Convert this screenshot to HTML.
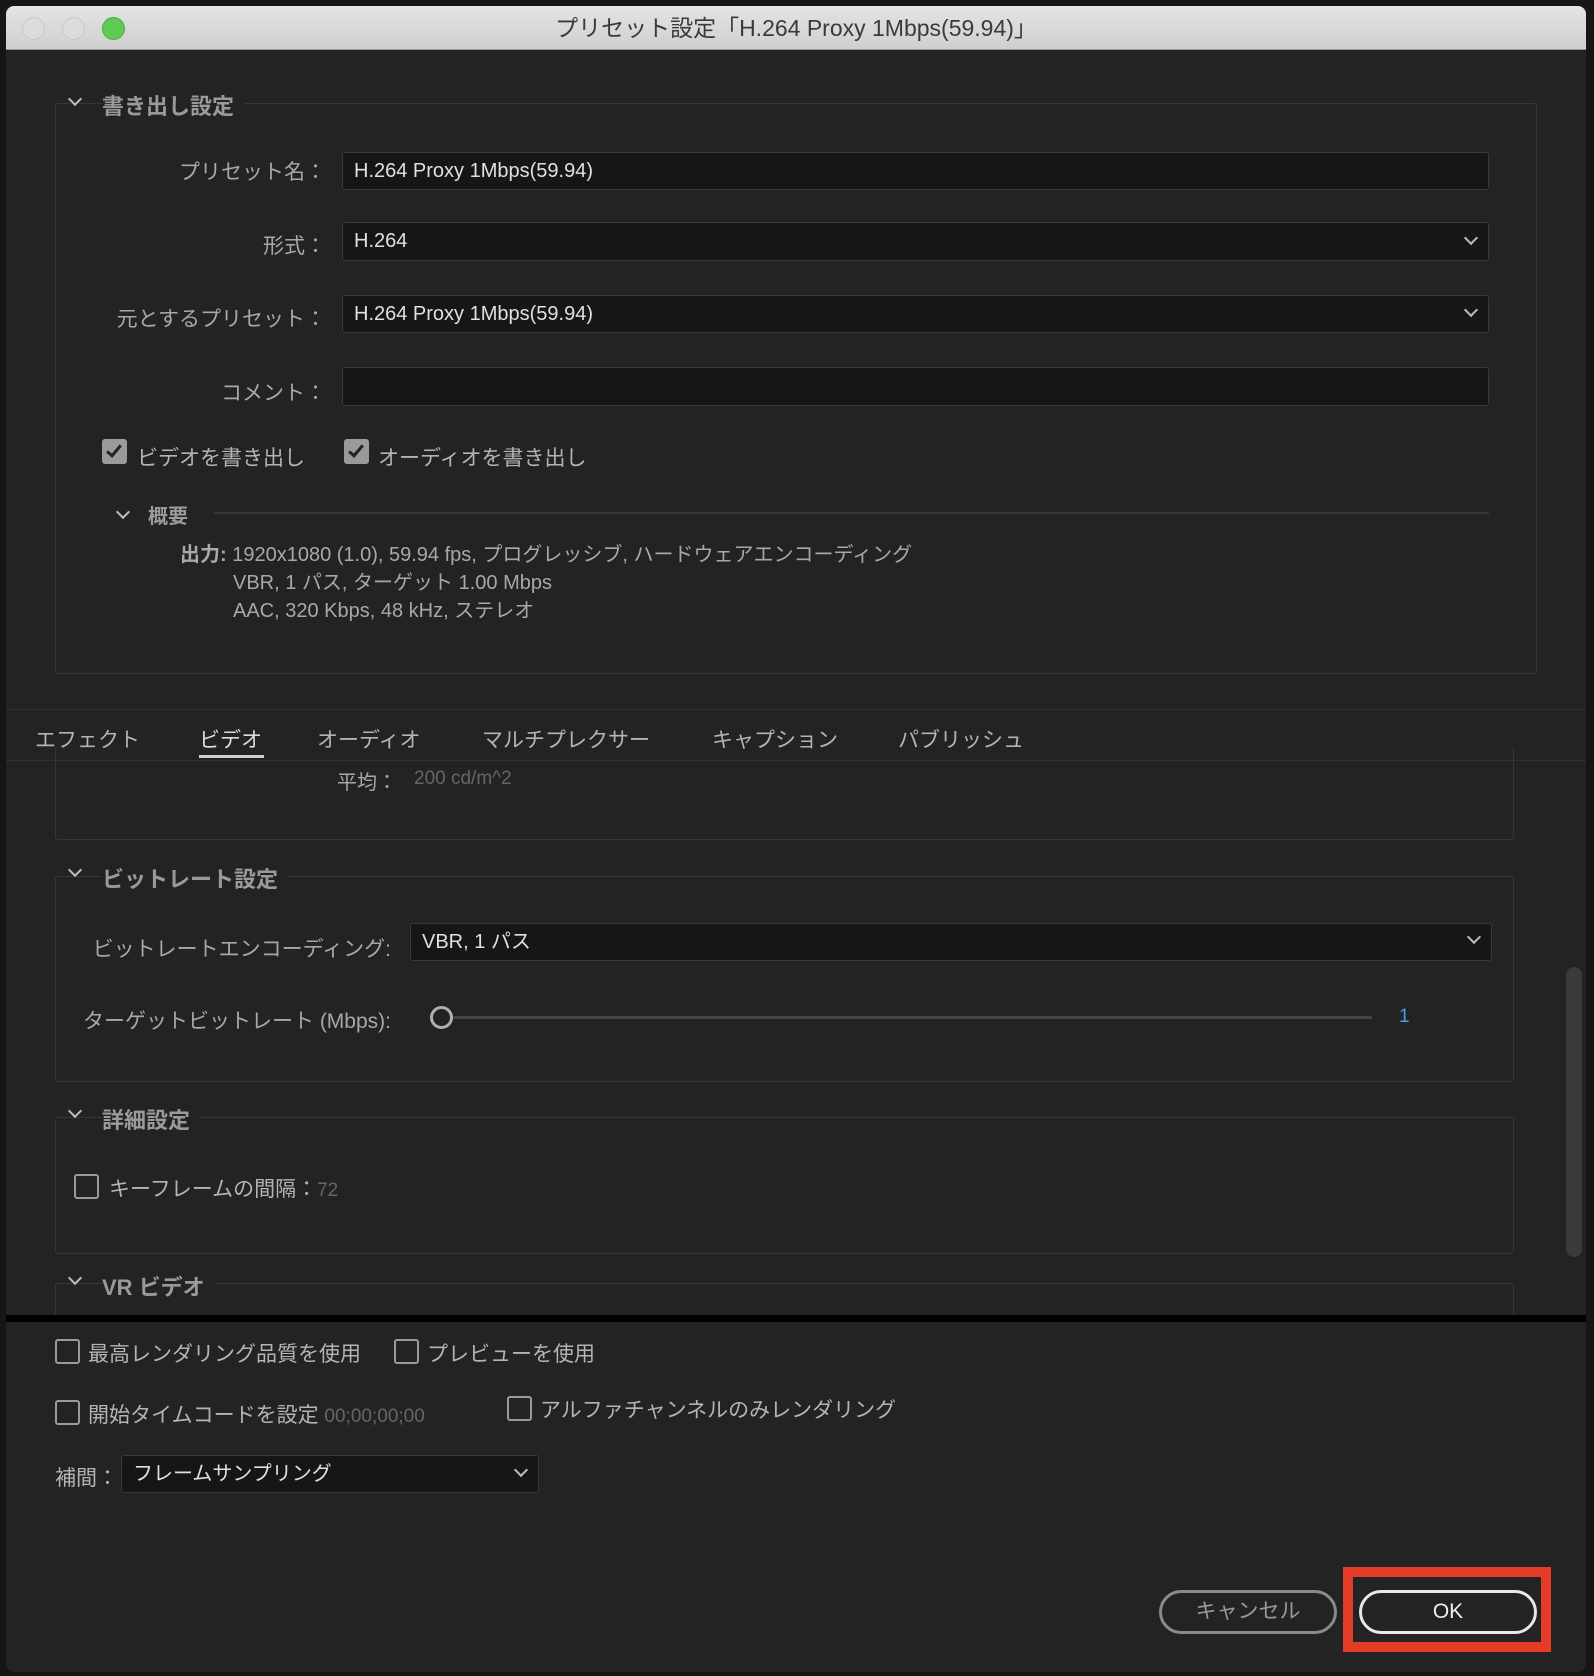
<!DOCTYPE html>
<html><head><meta charset="utf-8"><style>
*{box-sizing:border-box;margin:0;padding:0}
body{width:1594px;height:1676px;background:#161616;position:relative;overflow:hidden;font-family:"Liberation Sans","Noto Sans CJK JP",sans-serif;color:#b4b4b4;font-size:21px}
.a{position:absolute;white-space:nowrap}
.win{position:absolute;left:6px;top:6px;width:1580px;height:1666px;background:#232323;border-radius:8px;overflow:hidden}
.title{position:absolute;left:0;top:0;width:100%;height:44px;background:linear-gradient(#e4e4e4,#cfcfcf);border-bottom:1px solid #9a9a9a;text-align:center;line-height:44px;font-size:23px;color:#3a3a3a}
.dot{position:absolute;top:11px;width:23px;height:23px;border-radius:50%;background:#dcdcdc;border:1px solid #c8c8c8}
.box{position:absolute;border:1px solid #363636;border-radius:3px}
.hdr{position:absolute;font-weight:bold;color:#9a9a9a;font-size:22px;background:#232323;padding-right:10px}
.inp{position:absolute;background:#161616;border:1px solid #393939;border-radius:3px;color:#e0e0e0;font-size:20px;padding-left:11px}
.lbl{position:absolute;text-align:right;color:#a8a8a8}
.cb{position:absolute;width:25px;height:25px;border:2px solid #9a9a9a;border-radius:3px}
.cbk{background:#9a9a9a}
.ck{position:absolute;width:8px;height:15px;border-right:3px solid #232323;border-bottom:3px solid #232323;transform:rotate(40deg)}
.chev{position:absolute;width:10px;height:10px;border-right:2px solid #bdbdbd;border-bottom:2px solid #bdbdbd;transform:rotate(45deg)}
</style></head><body>
<div class="win">
<div class="title">プリセット設定「H.264 Proxy 1Mbps(59.94)」</div>
<div class="dot" style="left:16px"></div><div class="dot" style="left:56px"></div><div class="dot" style="left:96px;background:#5fcb52;border-color:#4bad3e"></div>

<div class="box" style="left:49px;top:97px;width:1482px;height:571px"></div>
<div class="chev" style="left:64px;top:88px"></div>
<div class="hdr" style="left:96px;top:83px">書き出し設定</div>

<div class="lbl" style="left:100px;width:220px;top:150px">プリセット名：</div>
<div class="inp" style="left:336px;top:146px;width:1147px;height:38px;line-height:36px">H.264 Proxy 1Mbps(59.94)</div>
<div class="lbl" style="left:100px;width:220px;top:224px">形式：</div>
<div class="inp" style="left:336px;top:216px;width:1147px;height:39px;line-height:37px">H.264</div>
<div class="chev" style="left:1460px;top:227px"></div>
<div class="lbl" style="left:60px;width:260px;top:297px">元とするプリセット：</div>
<div class="inp" style="left:336px;top:289px;width:1147px;height:38px;line-height:36px">H.264 Proxy 1Mbps(59.94)</div>
<div class="chev" style="left:1460px;top:299px"></div>
<div class="lbl" style="left:100px;width:220px;top:371px">コメント：</div>
<div class="inp" style="left:336px;top:361px;width:1147px;height:39px"></div>

<div class="cb cbk" style="left:96px;top:433px"></div><div class="ck" style="left:104px;top:436px"></div>
<div class="a" style="left:131px;top:436px">ビデオを書き出し</div>
<div class="cb cbk" style="left:338px;top:433px"></div><div class="ck" style="left:346px;top:436px"></div>
<div class="a" style="left:372px;top:436px">オーディオを書き出し</div>

<div class="a" style="left:208px;top:506px;width:1275px;height:2px;background:#363636"></div>
<div class="chev" style="left:112px;top:501px"></div>
<div class="hdr" style="left:142px;top:494px;font-size:20px">概要</div>
<div class="a" style="left:174px;top:535px;font-size:20px;color:#a8a8a8;line-height:28px"><b>出力:</b> 1920x1080 (1.0), 59.94 fps, プログレッシブ, ハードウェアエンコーディング</div>
<div class="a" style="left:227px;top:563px;font-size:20px;color:#a8a8a8;line-height:28px">VBR, 1 パス, ターゲット 1.00 Mbps</div>
<div class="a" style="left:227px;top:591px;font-size:20px;color:#a8a8a8;line-height:28px">AAC, 320 Kbps, 48 kHz, ステレオ</div>

<div class="a" style="left:0;top:703px;width:1580px;height:52px;border-top:1px solid #333;border-bottom:1px solid #333"></div>
<div class="a" style="left:29px;top:718px">エフェクト</div>
<div class="a" style="left:193px;top:718px;color:#dcdcdc">ビデオ</div>
<div class="a" style="left:193px;top:749px;width:65px;height:3px;background:#d0d0d0"></div>
<div class="a" style="left:311px;top:718px">オーディオ</div>
<div class="a" style="left:476px;top:718px">マルチプレクサー</div>
<div class="a" style="left:706px;top:718px">キャプション</div>
<div class="a" style="left:892px;top:718px">パブリッシュ</div>

<div class="box" style="left:49px;top:740px;width:1459px;height:94px;border-top:none"></div>
<div class="a" style="left:331px;top:760px;color:#a8a8a8;font-size:20px">平均：</div>
<div class="a" style="left:408px;top:762px;color:#666;font-size:19px">200 cd/m^2</div>

<div class="box" style="left:49px;top:870px;width:1459px;height:206px"></div>
<div class="chev" style="left:64px;top:859px"></div>
<div class="hdr" style="left:96px;top:856px">ビットレート設定</div>
<div class="lbl" style="left:30px;width:355px;top:927px">ビットレートエンコーディング:</div>
<div class="inp" style="left:404px;top:917px;width:1082px;height:38px;line-height:36px">VBR, 1 パス</div>
<div class="chev" style="left:1463px;top:926px"></div>
<div class="lbl" style="left:30px;width:355px;top:999px">ターゲットビットレート (Mbps):</div>
<div class="a" style="left:424px;top:1000px;width:23px;height:23px;border:3px solid #b0b0b0;border-radius:50%;background:#232323"></div>
<div class="a" style="left:447px;top:1010px;width:919px;height:3px;background:#444"></div>
<div class="a" style="left:1393px;top:1000px;color:#4b9cf0;font-size:19px">1</div>

<div class="box" style="left:49px;top:1111px;width:1459px;height:137px"></div>
<div class="chev" style="left:64px;top:1100px"></div>
<div class="hdr" style="left:96px;top:1097px">詳細設定</div>
<div class="cb" style="left:68px;top:1168px"></div>
<div class="a" style="left:103px;top:1167px">キーフレームの間隔：<span style="color:#666;font-size:19px">72</span></div>

<div class="box" style="left:49px;top:1277px;width:1459px;height:60px"></div>
<div class="chev" style="left:64px;top:1267px"></div>
<div class="hdr" style="left:96px;top:1264px">VR ビデオ</div>

<div class="a" style="left:1560px;top:961px;width:16px;height:290px;border-radius:8px;background:#3a3a3a"></div>

<div class="a" style="left:0;top:1309px;width:1580px;height:360px;background:#232323;border-top:7px solid #000"></div>
<div class="cb" style="left:49px;top:1333px"></div>
<div class="a" style="left:82px;top:1332px">最高レンダリング品質を使用</div>
<div class="cb" style="left:388px;top:1333px"></div>
<div class="a" style="left:421px;top:1332px">プレビューを使用</div>
<div class="cb" style="left:49px;top:1394px"></div>
<div class="a" style="left:82px;top:1393px">開始タイムコードを設定 <span style="color:#666;font-size:19px">00;00;00;00</span></div>
<div class="cb" style="left:501px;top:1390px"></div>
<div class="a" style="left:534px;top:1388px">アルファチャンネルのみレンダリング</div>
<div class="a" style="left:49px;top:1456px">補間：</div>
<div class="inp" style="left:115px;top:1449px;width:418px;height:38px;line-height:36px">フレームサンプリング</div>
<div class="chev" style="left:510px;top:1459px"></div>

<div class="a" style="left:1153px;top:1584px;width:178px;height:44px;border:3px solid #8a8a8a;border-radius:22px;text-align:center;line-height:38px;color:#9a9a9a">キャンセル</div>
<div class="a" style="left:1337px;top:1561px;width:208px;height:85px;border:10px solid #e33b26"></div>
<div class="a" style="left:1353px;top:1584px;width:178px;height:44px;border:3px solid #e8e8e8;border-radius:22px;text-align:center;line-height:38px;color:#f0f0f0">OK</div>
</div>
</body></html>
